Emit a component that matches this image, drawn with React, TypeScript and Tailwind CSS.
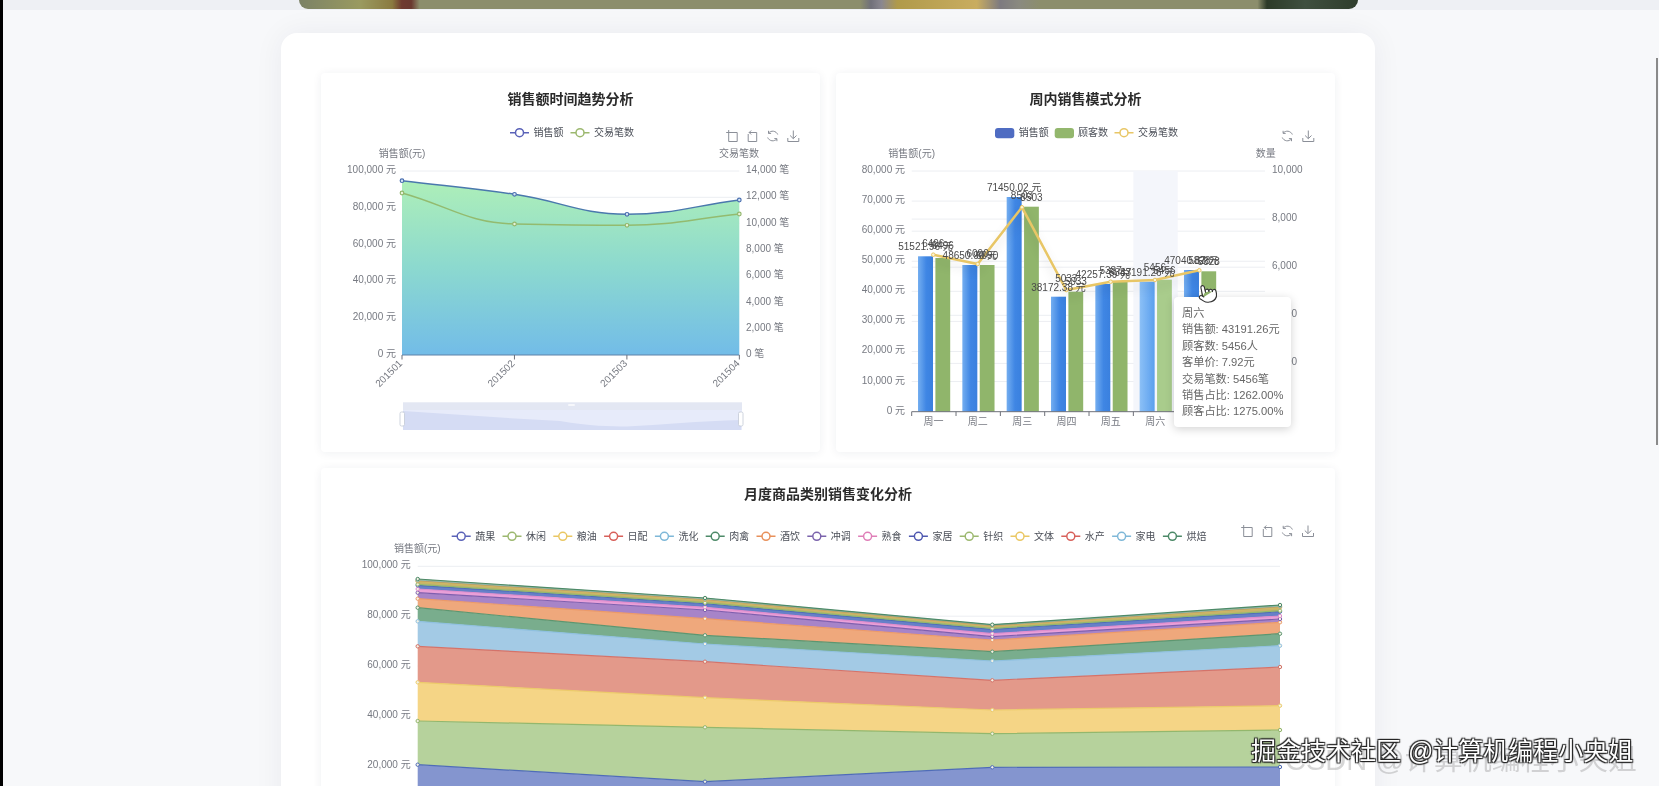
import { Pointer } from "lucide-react"

type Pt = [number, number]

// monotone curve, keeps flat stretches flat like the echarts smooth lines
const smooth = (pts: Pt[]) => {
  const slope = (a: Pt, b: Pt) => (b[1] - a[1]) / (b[0] - a[0])
  const tangent = (i: number) => {
    if (i === 0) return slope(pts[0], pts[1])
    if (i === pts.length - 1) return slope(pts[i - 1], pts[i])
    const s0 = slope(pts[i - 1], pts[i])
    const s1 = slope(pts[i], pts[i + 1])
    return s0 * s1 <= 0 ? 0 : (2 * s0 * s1) / (s0 + s1)
  }
  let d = `M${pts[0][0]} ${pts[0][1]}`
  for (let i = 0; i < pts.length - 1; i++) {
    const [x1, y1] = pts[i]
    const [x2, y2] = pts[i + 1]
    const h = (x2 - x1) * 0.42
    d += `C${x1 + h} ${y1 + tangent(i) * h} ${x2 - h} ${y2 - tangent(i + 1) * h} ${x2} ${y2}`
  }
  return d
}

const toolIcons = {
  zoom: "M0.5 2.5H11.5V11.5H3V0",
  back: "M2.5 4V11.5H11V2.5H3.5M5.5 0.5L3.5 2.5L5.5 4.5",
  refresh: "M11 4.5A5.4 5.4 0 0 0 1.8 3.2M1.8 0.8V3.4H4.4M1 7.5A5.4 5.4 0 0 0 10.2 8.8M10.2 11.2V8.6H7.6",
  save: "M6 0.5V8.5M2.8 5.5L6 8.7L9.2 5.5M0.5 8V11.5H11.5V8",
}

function Tool({ x, y, icon }: { x: number; y: number; icon: keyof typeof toolIcons }) {
  return (
    <path
      d={toolIcons[icon]}
      transform={`translate(${x - 6} ${y - 6})`}
      fill="none"
      stroke="#8b8f98"
      strokeWidth="1"
    />
  )
}

function LegendLine({ x, y, color, label }: { x: number; y: number; color: string; label: string }) {
  return (
    <g>
      <line x1={x} x2={x + 19} y1={y} y2={y} stroke={color} strokeWidth="1.5" />
      <circle cx={x + 9.5} cy={y} r="4" fill="#fff" stroke={color} strokeWidth="1.5" />
      <text x={x + 23.5} y={y + 3.5} className="text-[10px] fill-[#4b4f58]">
        {label}
      </text>
    </g>
  )
}

function Hline({ x1, x2, y }: { x1: number; x2: number; y: number }) {
  return <line x1={x1} x2={x2} y1={y} y2={y} stroke="#eceef2" strokeWidth="1" />
}

function AxisLabel({ x, y, anchor, children }: { x: number; y: number; anchor?: "start" | "middle" | "end"; children: string }) {
  return (
    <text x={x} y={y + 3.5} textAnchor={anchor ?? "start"} className="text-[10px] fill-[#777a82]">
      {children}
    </text>
  )
}

/* 销售额时间趋势分析 */
const salesLine: Pt[] = [[402, 180.7], [514.5, 194.3], [627, 214.3], [739.3, 200]]
const txLine: Pt[] = [[402, 193], [514.5, 224], [627, 225.3], [739.3, 214]]
const months = ["201501", "201502", "201503", "201504"]

function TrendChart() {
  return (
    <svg viewBox="321 109 499 343" className="block h-[343px] w-[499px]">
      <defs>
        <linearGradient id="trendArea" gradientUnits="userSpaceOnUse" x1="0" x2="0" y1="180" y2="355">
          <stop offset="0" stopColor="#aeefb8" />
          <stop offset="0.5" stopColor="#8cd9cf" />
          <stop offset="1" stopColor="#72bce8" />
        </linearGradient>
      </defs>
      <LegendLine x={510} y={132.7} color="#5a62b8" label="销售额" />
      <LegendLine x={570.5} y={132.7} color="#9cb86f" label="交易笔数" />
      <Tool x={731.7} y={136} icon="zoom" />
      <Tool x={751.7} y={136} icon="back" />
      <Tool x={772.7} y={136} icon="refresh" />
      <Tool x={793.3} y={136} icon="save" />

      <AxisLabel x={402} y={153} anchor="middle">销售额(元)</AxisLabel>
      <AxisLabel x={739} y={153} anchor="middle">交易笔数</AxisLabel>

      {[171, 197.3, 223.6].map((y) => (
        <Hline key={y} x1={402} x2={739.3} y={y} />
      ))}
      {["100,000 元", "80,000 元", "60,000 元", "40,000 元", "20,000 元", "0 元"].map((t, i) => (
        <AxisLabel key={t} x={396} y={169.5 + i * 36.8} anchor="end">{t}</AxisLabel>
      ))}
      {["14,000 笔", "12,000 笔", "10,000 笔", "8,000 笔", "6,000 笔", "4,000 笔", "2,000 笔", "0 笔"].map((t, i) => (
        <AxisLabel key={t} x={746} y={169.5 + i * 26.3}>{t}</AxisLabel>
      ))}

      <path d={`${smooth(salesLine)}L739.3 355L402 355Z`} fill="url(#trendArea)" />
      <path d={smooth(salesLine)} fill="none" stroke="#4a78ad" strokeWidth="1.5" />
      <path d={smooth(txLine)} fill="none" stroke="#93bb6f" strokeWidth="1.5" />
      {salesLine.map(([x, y]) => (
        <circle key={x} cx={x} cy={y} r="1.8" fill="#d6e6f4" stroke="#4a6fb0" strokeWidth="1.2" />
      ))}
      {txLine.map(([x, y]) => (
        <circle key={x} cx={x} cy={y} r="1.8" fill="#e6f3d8" stroke="#93b76d" strokeWidth="1.2" />
      ))}

      <line x1="402" x2="739.3" y1="355" y2="355" stroke="#5f82a8" strokeWidth="1" />
      {months.map((m, i) => {
        const x = 402 + i * 112.45
        return (
          <g key={m}>
            <line x1={x} x2={x} y1={355} y2={359.5} stroke="#6e7079" strokeWidth="1" />
            <text
              x={x + 1}
              y={364}
              textAnchor="end"
              transform={`rotate(-45 ${x + 1} 364)`}
              className="text-[10px] fill-[#777a82]"
            >
              {m}
            </text>
          </g>
        )
      })}

      {/* data zoom */}
      <rect x="403" y="402.3" width="339" height="7.7" fill="#e3e7f3" />
      <rect x="403" y="410" width="339" height="20" fill="#e7ebfa" />
      <path d="M403 411L515 418.5L560 421C590 426 610 426.5 627 426.5C660 425 700 421 741 420V430H403Z" fill="#d5dcf4" />
      <rect x="403" y="411" width="4.5" height="14" rx="1.5" fill="#fff" stroke="#c3c9d6" strokeWidth="0.8" transform="translate(-3 1)" />
      <rect x="739" y="411" width="4.5" height="14" rx="1.5" fill="#fff" stroke="#c3c9d6" strokeWidth="0.8" transform="translate(-0.5 1)" />
      <rect x="568" y="404" width="7" height="2" rx="1" fill="#f6f7fb" />
    </svg>
  )
}

/* 周内销售模式分析 */
const weekDays = ["周一", "周二", "周三", "周四", "周五", "周六", "周日"]
const blueTops = [256.3, 265, 197, 296.7, 284, 281.7, 270]
const greenTops = [258, 265, 206.7, 291.7, 282, 279.7, 271.3]
const lineY = [254.7, 264, 207.3, 290, 281.7, 280, 270.3]
const salesText = ["51521.96 元", "48650.90 元", "71450.02 元", "38172.38 元", "42257.39 元", "43191.26 元", "47040.87 元"]
const salesTextY = [246.7, 255.7, 187, 287, 274.3, 272.3, 260.3]
const custText = ["6496", "6090", "8503", "5033", "5387", "5456", "5828"]
const custTextY = [245, 255.7, 197, 281, 272.3, 270, 261.7]
const lineTextY = [243.3, 253, 195, 278.3, 270, 267.7, 260]

function WeekChart() {
  return (
    <svg viewBox="836 109 499 343" className="block h-[343px] w-[499px]">
      <defs>
        <linearGradient id="barBlue" x1="0" x2="1" y1="0" y2="0">
          <stop offset="0" stopColor="#74aef0" />
          <stop offset="0.55" stopColor="#3f86e4" />
          <stop offset="1" stopColor="#3a80de" />
        </linearGradient>
        <linearGradient id="barBlueHover" x1="0" x2="1" y1="0" y2="0">
          <stop offset="0" stopColor="#8cc0f6" />
          <stop offset="1" stopColor="#5a9fee" />
        </linearGradient>
      </defs>
      <rect x="995" y="128" width="19.3" height="10.3" rx="3" fill="#4f6cc2" />
      <text x="1018.7" y="136" className="text-[10px] fill-[#4b4f58]">销售额</text>
      <rect x="1054.7" y="128" width="19.3" height="10.3" rx="3" fill="#93b76d" />
      <text x="1078" y="136" className="text-[10px] fill-[#4b4f58]">顾客数</text>
      <LegendLine x={1114.5} y={132.7} color="#e8c666" label="交易笔数" />
      <Tool x={1287.3} y={136} icon="refresh" />
      <Tool x={1308.3} y={136} icon="save" />

      <AxisLabel x={911.7} y={153} anchor="middle">销售额(元)</AxisLabel>
      <AxisLabel x={1265.7} y={153} anchor="middle">数量</AxisLabel>

      {[0, 1, 2, 3, 4, 5, 6, 7].map((i) => (
        <Hline key={i} x1={911.7} x2={1265} y={171 + i * 30.08} />
      ))}
      {[1, 2, 3, 4].map((i) => (
        <Hline key={i} x1={911.7} x2={1265} y={171 + i * 48.1} />
      ))}
      {["80,000 元", "70,000 元", "60,000 元", "50,000 元", "40,000 元", "30,000 元", "20,000 元", "10,000 元", "0 元"].map((t, i) => (
        <AxisLabel key={t} x={905} y={169.5 + i * 30.08} anchor="end">{t}</AxisLabel>
      ))}
      {["10,000", "8,000", "6,000", "4,000", "2,000"].map((t, i) => (
        <AxisLabel key={t} x={1272} y={169.5 + i * 48.1}>{t}</AxisLabel>
      ))}

      <rect x="1133.4" y="171" width="44.3" height="240.7" fill="#f4f6fb" />

      {weekDays.map((d, i) => (
        <g key={d}>
          <rect
            x={918 + i * 44.33}
            y={blueTops[i]}
            width="15"
            height={411.7 - blueTops[i]}
            fill={i === 5 ? "url(#barBlueHover)" : "url(#barBlue)"}
          />
          <rect
            x={935.4 + i * 44.33}
            y={greenTops[i]}
            width="14.8"
            height={411.7 - greenTops[i]}
            fill={i === 5 ? "#a9cc8c" : "#90b56b"}
          />
        </g>
      ))}

      <line x1="911.7" x2="1265" y1="411.7" y2="411.7" stroke="#6e7079" strokeWidth="1" />
      {weekDays.map((d, i) => (
        <g key={d}>
          <line x1={911.7 + i * 44.33} x2={911.7 + i * 44.33} y1={411.7} y2={416} stroke="#6e7079" strokeWidth="1" />
          <AxisLabel x={933.5 + i * 44.33} y={421} anchor="middle">{d}</AxisLabel>
        </g>
      ))}

      <polyline
        points={lineY.map((y, i) => `${933.3 + i * 44.33},${y}`).join(" ")}
        fill="none"
        stroke="#e8c666"
        strokeWidth="2.5"
        className="drop-shadow-[0_6px_5px_rgba(0,0,0,0.12)]"
      />
      {lineY.map((y, i) => (
        <circle key={i} cx={933.3 + i * 44.33} cy={y} r="1.8" fill="#fdf3d2" stroke="#e8c666" strokeWidth="1" />
      ))}

      <g className="text-[10px] fill-[#4a4a4a]">
        {weekDays.map((d, i) => (
          <g key={d}>
            <text x={925.5 + i * 44.33} y={salesTextY[i] + 3.5} textAnchor="middle">{salesText[i]}</text>
            <text x={942.8 + i * 44.33} y={custTextY[i] + 3.5} textAnchor="middle">{custText[i]}</text>
            <text x={933.3 + i * 44.33} y={lineTextY[i] + 3.5} textAnchor="middle">{custText[i]}</text>
          </g>
        ))}
      </g>
    </svg>
  )
}

/* 月度商品类别销售变化分析 */
const categories = [
  { name: "蔬果", line: "#5a62b8", fill: "#8495cf", stroke: "#4f6cb8", y: [764.7, 781.7, 767.3, 767] },
  { name: "休闲", line: "#9cb86f", fill: "#b6d29c", stroke: "#93b76d", y: [721, 727.3, 733.7, 730] },
  { name: "粮油", line: "#eac763", fill: "#f5d586", stroke: "#eccb6a", y: [682.3, 697.7, 710, 705.7] },
  { name: "日配", line: "#d8605a", fill: "#e3998a", stroke: "#d4736a", y: [646.3, 661.7, 680.3, 667] },
  { name: "洗化", line: "#7fb8d8", fill: "#a3cae5", stroke: "#8fc0e0", y: [621.3, 644, 661, 645.7] },
  { name: "肉禽", line: "#4d8a68", fill: "#79ad8d", stroke: "#5d9670", y: [607.7, 635.3, 651.7, 633.7] },
  { name: "酒饮", line: "#e8905a", fill: "#efa87c", stroke: "#ec9a68", y: [598.7, 618.7, 640, 622.3] },
  { name: "冲调", line: "#7b63ac", fill: "#a784c8", stroke: "#7f5fae", y: [592.7, 610, 636.7, 619] },
  { name: "熟食", line: "#df7fb8", fill: "#e9a0d8", stroke: "#e08ccd", y: [589, 607.3, 633.7, 616] },
  { name: "家居", line: "#4f58b0", fill: "#6680c8", stroke: "#4f6cb8", y: [585.3, 603.7, 629.3, 611.7] },
  { name: "针织", line: "#9cb86f", fill: "#a5bb70", stroke: "#93b76d", y: [584.3, 602.7, 628.3, 610.7] },
  { name: "文体", line: "#eac763", fill: "#c8b468", stroke: "#d4bb62", y: [581.3, 600, 626, 607.3] },
  { name: "水产", line: "#d8605a", fill: "#b9a868", stroke: "#c09a60", y: [580.7, 599.3, 625.7, 606.7] },
  { name: "家电", line: "#7fb8d8", fill: "#a9b27c", stroke: "#8fb8a8", y: [580, 598.7, 625, 606] },
  { name: "烘焙", line: "#4d8a68", fill: "#8fa572", stroke: "#4d8a68", y: [579, 598, 624.7, 605] },
]
const monthX = [417.7, 705, 992.3, 1280]

function CategoryChart() {
  return (
    <svg viewBox="321 504 1014 364" className="block h-[364px] w-[1014px]">
      {categories.map((c, i) => (
        <LegendLine key={c.name} x={451.7 + i * 50.8} y={536.3} color={c.line} label={c.name} />
      ))}
      <Tool x={1246.7} y={531} icon="zoom" />
      <Tool x={1266.8} y={531} icon="back" />
      <Tool x={1287.4} y={531} icon="refresh" />
      <Tool x={1308} y={531} icon="save" />

      <AxisLabel x={417.3} y={548.7} anchor="middle">销售额(元)</AxisLabel>
      {["100,000 元", "80,000 元", "60,000 元", "40,000 元", "20,000 元"].map((t, i) => (
        <g key={t}>
          <Hline x1={417.7} x2={1280} y={566.3 + i * 49.9} />
          <AxisLabel x={410.7} y={564.5 + i * 50} anchor="end">{t}</AxisLabel>
        </g>
      ))}

      {categories.map((c, i) => {
        const top = monthX.map((x, k) => `${x},${c.y[k]}`)
        const lower = i === 0 ? monthX.map((x) => `${x},816`) : monthX.map((x, k) => `${x},${categories[i - 1].y[k]}`)
        return <polygon key={c.name} points={[...top, ...lower.reverse()].join(" ")} fill={c.fill} />
      })}
      {categories.map((c) => (
        <g key={c.name}>
          <polyline
            points={monthX.map((x, k) => `${x},${c.y[k]}`).join(" ")}
            fill="none"
            stroke={c.stroke}
            strokeWidth="1.2"
          />
          {monthX.map((x, k) => (
            <circle key={x} cx={x} cy={c.y[k]} r="1.7" fill="#f3f1e4" stroke={c.stroke} strokeWidth="1" />
          ))}
        </g>
      ))}
    </svg>
  )
}

function ChartCard({ title, className, children }: { title: string; className?: string; children: React.ReactNode }) {
  return (
    <div className={`relative overflow-hidden rounded-[4px] bg-white shadow-[0_1px_10px_rgba(30,40,70,0.07)] ${className ?? ""}`}>
      <h3 className="pt-4 text-center text-[14px] leading-5 font-bold text-[#2b2b2b]">{title}</h3>
      {children}
    </div>
  )
}

const tooltipRows = [
  "周六",
  "销售额: 43191.26元",
  "顾客数: 5456人",
  "客单价: 7.92元",
  "交易笔数: 5456笔",
  "销售占比: 1262.00%",
  "顾客占比: 1275.00%",
]

export default function App() {
  return (
    <div className="relative flex h-[786px] w-[1659px] overflow-hidden bg-[#f7f8fa] font-['Liberation_Sans','Noto_Sans_CJK_SC',sans-serif] blur-[0.45px]">
      <div className="w-[3px] shrink-0 bg-black" />
      <main className="flex-1">
        {/* hero image bottom edge */}
        <div className="h-[10px] bg-[#eef0f4]">
          <div className="ml-[296px] h-[9px] w-[1059px] rounded-b-[12px] bg-[linear-gradient(90deg,#7b8266_0%,#9a9a60_5.8%,#8a7a40_8.8%,#6f3a30_9.7%,#6a3830_10.6%,#8c8e6c_11.4%,#8c8e6c_53%,#70707a_54%,#8a8790_55%,#b09a4a_56.5%,#c9ad60_64%,#7d7a80_66.2%,#8a8a80_68%,#8c8e6c_70%,#8c8e6c_90.5%,#2c3a28_91.4%,#3f5040_95%,#2f3d2d_100%)]" />
        </div>
        <div className="ml-[278px] mt-[23px] w-[1094px] rounded-[16px] bg-white px-10 pt-10 pb-10 shadow-[0_0_30px_rgba(30,40,70,0.06)]">
          <div className="grid grid-cols-2 gap-4">
            <ChartCard title="销售额时间趋势分析" className="h-[379px]">
              <TrendChart />
            </ChartCard>
            <ChartCard title="周内销售模式分析" className="h-[379px]">
              <WeekChart />
              <div className="absolute left-[338px] top-[224px] h-[130px] w-[117px] rounded-[4px] bg-white px-2 py-[8px] text-[11.2px] leading-[16.4px] whitespace-nowrap text-[#666] shadow-[0_2px_10px_rgba(0,0,0,0.18)]">
                {tooltipRows.map((r) => (
                  <div key={r}>{r}</div>
                ))}
              </div>
              <Pointer className="absolute left-[361px] top-[210px] h-[21px] w-[21px] -rotate-12 fill-white text-[#333]" strokeWidth={1.3} />
            </ChartCard>
            <ChartCard title="月度商品类别销售变化分析" className="col-span-2 h-[400px]">
              <CategoryChart />
            </ChartCard>
          </div>
        </div>
      </main>

      {/* scrollbar thumb */}
      <div className="absolute right-[1px] top-[58px] h-[387px] w-[2px] bg-[#8a8a8a]" />

      {/* video watermarks */}
      <div className="absolute left-[1285px] top-[742px] text-[29px] leading-9 whitespace-nowrap text-[#8a8a8a]/35">
        CSDN @计算机编程小央姐
      </div>
      <div className="absolute left-[1251px] top-[733px] text-[25px] leading-9 whitespace-nowrap text-white [text-shadow:1px_1px_1px_#222,-1px_-1px_1px_#222,1px_-1px_1px_#222,-1px_1px_1px_#222]">
        掘金技术社区 @计算机编程小央姐
      </div>
    </div>
  )
}
